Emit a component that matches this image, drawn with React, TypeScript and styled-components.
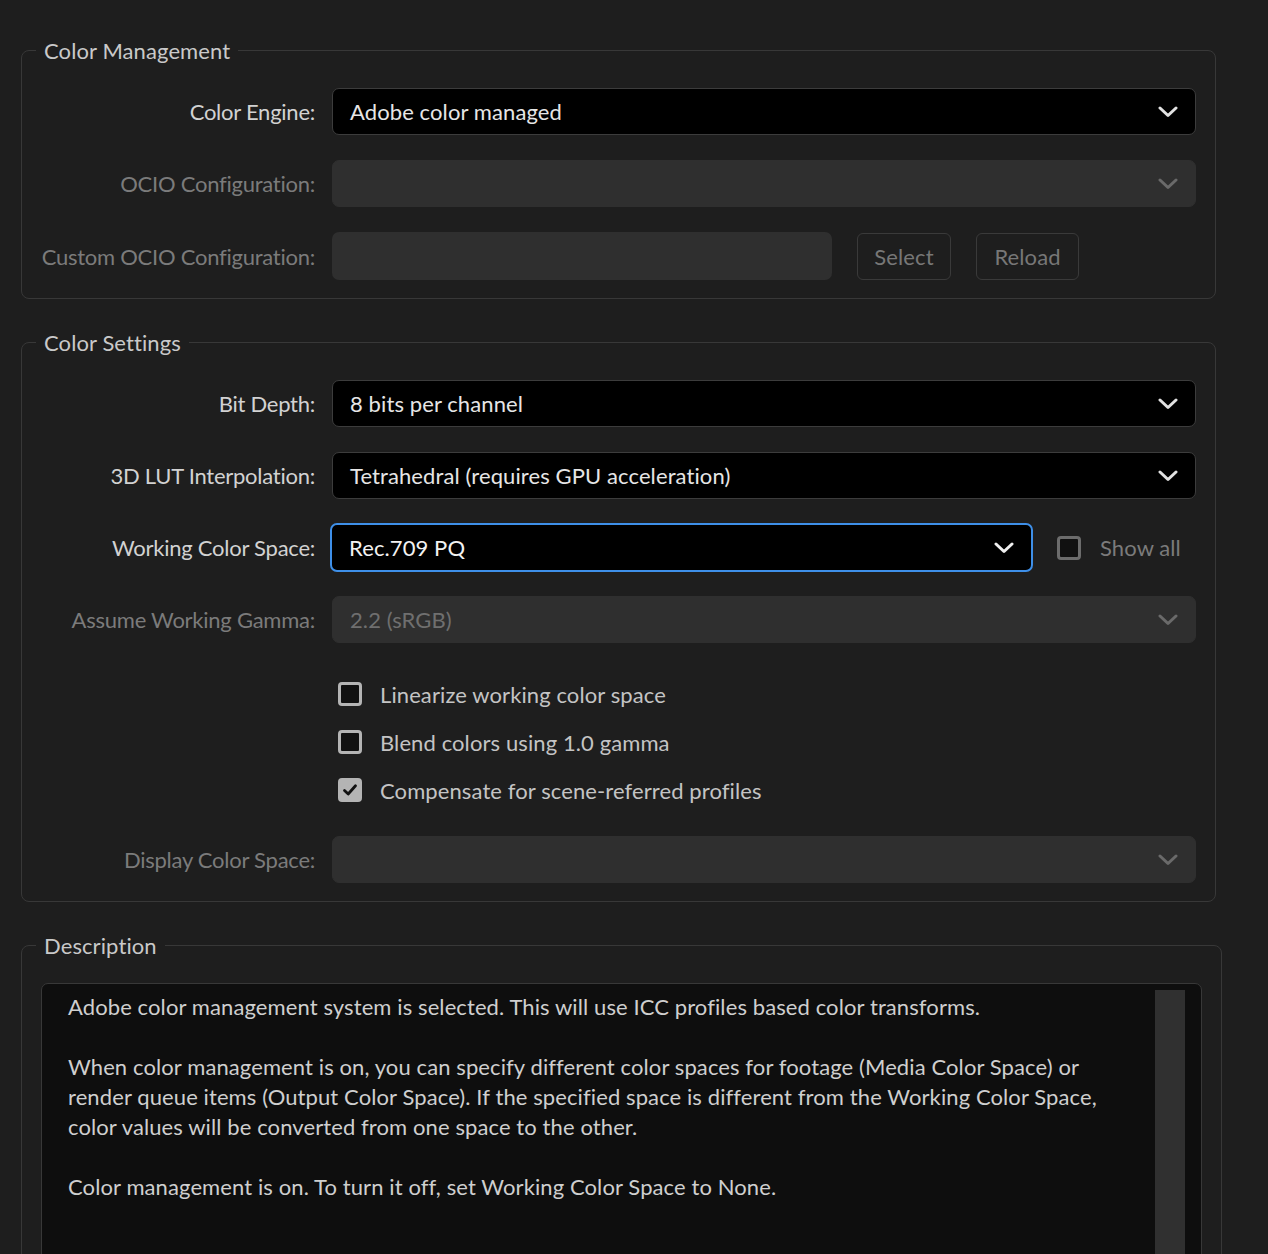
import React from "react";
import styled, { createGlobalStyle, css } from "styled-components";

const GlobalStyle = createGlobalStyle`
  html, body {
    margin: 0;
    padding: 0;
    background: #1e1e1e;
    overflow: hidden;
  }
  body {
    font-family: Lato, "Noto Sans", "Liberation Sans", sans-serif;
    -webkit-font-smoothing: antialiased;
  }
`;

const Page = styled.div`
  display: flex;
  flex-direction: column;
  gap: 30px;
  padding: 37px 0 0 21px;
  width: 1201px;
`;

const Group = styled.fieldset<{ $wide?: boolean }>`
  margin: 0;
  border: 1px solid #383838;
  border-radius: 8px;
  padding: 0 19px 18px 14px;
  width: ${(p) => (p.$wide ? "1201px" : "1195px")};
  box-sizing: border-box;
  min-width: 0;
`;

const Legend = styled.legend`
  padding: 0 8px;
  font-size: 22px;
  line-height: 27px;
  color: #c9c9c9;
  letter-spacing: 0.1px;
`;

const FormGrid = styled.div`
  display: grid;
  grid-template-columns: 279px 1fr;
  column-gap: 17px;
  row-gap: 25px;
  padding-top: 24px;
  align-items: center;
`;

const Label = styled.div<{ $disabled?: boolean }>`
  text-align: right;
  font-size: 22px;
  letter-spacing: -0.25px;
  color: ${(p) => (p.$disabled ? "#7b7b7b" : "#d2d2d2")};
  white-space: nowrap;
`;

const Select = styled.div<{ $disabled?: boolean; $focused?: boolean }>`
  height: 47px;
  box-sizing: border-box;
  border-radius: 7px;
  display: flex;
  align-items: center;
  justify-content: space-between;
  padding: 0 17px 0 17px;
  font-size: 22px;
  letter-spacing: 0.1px;
  ${(p) =>
    p.$disabled
      ? css`
          background: #2f2f2f;
          border: 1px solid #2f2f2f;
          color: #6f6f6f;
        `
      : p.$focused
      ? css`
          background: #000;
          border: 2px solid #3e8fe8;
          color: #f2f2f2;
          padding: 0 17px 0 17px;
          height: 49px;
          margin: -1px 0 -1px -2px;
        `
      : css`
          background: #000;
          border: 1px solid #3c3c3c;
          color: #e6e6e6;
        `}
`;

const Chevron = ({ color }: { color: string }) => (
  <svg width="20" height="12" viewBox="0 0 20 12" fill="none">
    <path d="M2 2 L10 9.5 L18 2" stroke={color} strokeWidth="3" strokeLinecap="round" strokeLinejoin="round" />
  </svg>
);

const InputRow = styled.div`
  display: flex;
  align-items: center;
  gap: 25px;
`;

const TextInput = styled.div`
  width: 500px;
  height: 48px;
  border-radius: 7px;
  background: #2f2f2f;
`;

const Button = styled.div<{ $w: number }>`
  width: ${(p) => p.$w}px;
  height: 47px;
  box-sizing: border-box;
  border: 1px solid #3a3a3a;
  border-radius: 6px;
  display: flex;
  align-items: center;
  justify-content: center;
  font-size: 22px;
  color: #777;
  letter-spacing: 0.1px;
`;

const Box = styled.span<{ $tone: "light" | "dim"; $checked?: boolean }>`
  width: 24px;
  height: 24px;
  box-sizing: border-box;
  border-radius: 4px;
  flex: none;
  display: flex;
  align-items: center;
  justify-content: center;
  border: 3px solid ${(p) => (p.$tone === "light" ? "#b4b4b4" : "#6c6c6c")};
  background: ${(p) => (p.$checked ? "#b4b4b4" : "#111")};
`;

const Check = () => (
  <svg width="16" height="14" viewBox="0 0 16 14" fill="none">
    <path d="M2.5 7.5 L6.2 11 L13.5 2.8" stroke="#111" strokeWidth="2.8" strokeLinecap="round" strokeLinejoin="round" />
  </svg>
);

const CheckRow = styled.div<{ $dim?: boolean }>`
  display: flex;
  align-items: center;
  gap: 18px;
  height: 48px;
  padding-left: 6px;
  font-size: 22px;
  letter-spacing: 0.1px;
  color: ${(p) => (p.$dim ? "#7b7b7b" : "#c4c4c4")};
`;

const CheckList = styled.div`
  grid-column: 2;
  display: flex;
  flex-direction: column;
  margin: 2px 0 -3px;
`;

const SplitRow = styled.div`
  display: flex;
  align-items: center;
`;

const SplitSelect = styled.div`
  width: 701px;
`;

const ShowAll = styled(CheckRow)`
  padding-left: 24px;
  gap: 19px;
  height: auto;
`;

const Spacer = styled.div``;

const DescBox = styled.div`
  margin-top: 24px;
  margin-left: 5px;
  height: 320px;
  border: 1px solid #383838;
  border-radius: 7px;
  background: #0e0e0e;
  display: flex;
  justify-content: space-between;
  padding: 6px 16px 0 26px;
`;

const DescText = styled.div`
  font-size: 22px;
  line-height: 30px;
  letter-spacing: 0.1px;
  color: #cfcfcf;
  white-space: nowrap;
  padding-top: 2px;
  p {
    margin: 0 0 30px 0;
  }
`;

const Scrollbar = styled.div`
  width: 30px;
  flex: none;
  background: #303030;
`;

const Field = ({
  label,
  value,
  disabled,
}: {
  label: string;
  value?: string;
  disabled?: boolean;
}) => (
  <>
    <Label $disabled={disabled}>{label}</Label>
    <Select $disabled={disabled}>
      <span>{value}</span>
      <Chevron color={disabled ? "#6a6a6a" : "#e2e2e2"} />
    </Select>
  </>
);

export default function App() {
  return (
    <>
      <GlobalStyle />
      <Page>
        <Group>
          <Legend>Color Management</Legend>
          <FormGrid>
            <Field label="Color Engine:" value="Adobe color managed" />
            <Field label="OCIO Configuration:" disabled />
            <Label $disabled>Custom OCIO Configuration:</Label>
            <InputRow>
              <TextInput />
              <Button $w={94}>Select</Button>
              <Button $w={103}>Reload</Button>
            </InputRow>
          </FormGrid>
        </Group>

        <Group>
          <Legend>Color Settings</Legend>
          <FormGrid>
            <Field label="Bit Depth:" value="8 bits per channel" />
            <Field label="3D LUT Interpolation:" value="Tetrahedral (requires GPU acceleration)" />
            <Label>Working Color Space:</Label>
            <SplitRow>
              <SplitSelect>
                <Select $focused>
                  <span>Rec.709 PQ</span>
                  <Chevron color="#f0f0f0" />
                </Select>
              </SplitSelect>
              <ShowAll $dim>
                <Box $tone="dim" />
                Show all
              </ShowAll>
            </SplitRow>
            <Field label="Assume Working Gamma:" value="2.2 (sRGB)" disabled />
            <Spacer />
            <CheckList>
              <CheckRow>
                <Box $tone="light" />
                Linearize working color space
              </CheckRow>
              <CheckRow>
                <Box $tone="light" />
                Blend colors using 1.0 gamma
              </CheckRow>
              <CheckRow>
                <Box $tone="light" $checked>
                  <Check />
                </Box>
                Compensate for scene-referred profiles
              </CheckRow>
            </CheckList>
            <Field label="Display Color Space:" disabled />
          </FormGrid>
        </Group>

        <Group $wide>
          <Legend>Description</Legend>
          <DescBox>
            <DescText>
              <p>Adobe color management system is selected. This will use ICC profiles based color transforms.</p>
              <p>
                When color management is on, you can specify different color spaces for footage (Media Color Space) or
                <br />
                render queue items (Output Color Space). If the specified space is different from the Working Color Space,
                <br />
                color values will be converted from one space to the other.
              </p>
              <p>Color management is on. To turn it off, set Working Color Space to None.</p>
            </DescText>
            <Scrollbar />
          </DescBox>
        </Group>
      </Page>
    </>
  );
}
